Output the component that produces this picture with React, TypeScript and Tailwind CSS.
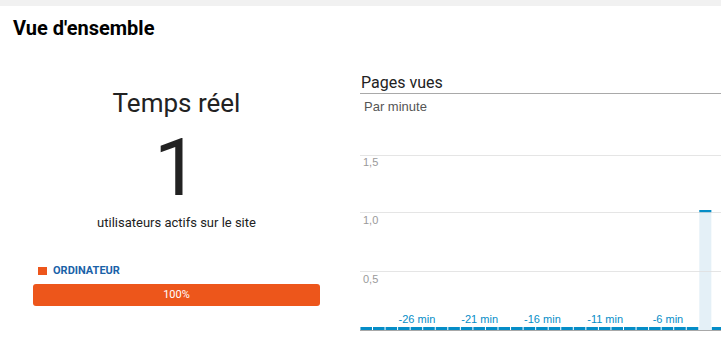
import React from 'react';

const BLUE = '#058dc7';

const xLabels = [
  { bar: 4, text: '-26 min' },
  { bar: 9, text: '-21 min' },
  { bar: 14, text: '-16 min' },
  { bar: 19, text: '-11 min' },
  { bar: 24, text: '-6 min' },
];

function PageViewsChart() {
  const step = 12.55;
  const bars = Array.from({ length: 30 }, (_, i) => i);
  const hot = 27;

  return (
    <svg width="361" height="228" className="block" style={{ fontFamily: "'Liberation Sans', Arial, sans-serif" }}>
      {/* highlighted minute */}
      <rect x={0.45 + step * hot} y={95} width={step - 0.5} height={120} fill="#e4f0f7" />
      <rect x={0.45 + step * hot} y={95} width={step - 0.5} height={3} fill={BLUE} />

      {/* grid */}
      {[40, 97, 156].map((y) => (
        <rect key={y} x={0} y={y} width={361} height={1} fill="#dedede" opacity={0.8} />
      ))}
      <text x={3} y={51} fontSize="11" fill="#9a9a9a">1,5</text>
      <text x={3} y={109} fontSize="11" fill="#9a9a9a">1,0</text>
      <text x={3} y={168} fontSize="11" fill="#9a9a9a">0,5</text>

      {/* zero values */}
      {bars.map((i) =>
        i === hot ? null : (
          <rect key={i} x={0.45 + step * i} y={212} width={step - 1} height={3} fill={BLUE} />
        )
      )}
      <rect x={0} y={215} width={361} height={1} fill="#a8a8a8" />

      {xLabels.map((l) => (
        <text
          key={l.text}
          x={0.45 + step * l.bar + step / 2}
          y={208}
          fontSize="11"
          fill={BLUE}
          textAnchor="middle"
        >
          {l.text}
        </text>
      ))}
    </svg>
  );
}

export default function App() {
  return (
    <div className="w-[721px] h-[343px] overflow-hidden bg-white" style={{ fontFamily: "Roboto, 'Liberation Sans', sans-serif" }}>
      <div className="h-[6px] bg-[#f1f1f1]" />

      <div className="pt-[10px] px-[13px]">
        <h1 className="text-[20px] leading-[24px] font-bold text-black">Vue d'ensemble</h1>
      </div>

      <div className="mt-[20px] flex">
        {/* Real time */}
        <div className="w-[353px] flex flex-col items-center pt-[27px] px-[33px]">
          <div className="text-[26px] leading-[32px] text-[#222]">Temps réel</div>
          <div className="mt-[9px] text-[80px] leading-[80px] text-[#222]">1</div>
          <div className="mt-[7px] text-[13px] leading-[16px] text-[#222]">utilisateurs actifs sur le site</div>

          <div className="self-stretch mt-[34px] flex items-center gap-[6px] pl-[5px]">
            <span className="w-[9px] h-[8px] bg-[#ed561b]" />
            <span className="text-[11px] leading-[12px] font-bold text-[#1a62a8]">ORDINATEUR</span>
          </div>
          <div className="self-stretch mt-[7px] h-[22px] rounded-[3px] bg-[#ed561b] flex items-center justify-center">
            <span className="text-[11px] text-white">100%</span>
          </div>
        </div>

        {/* Page views */}
        <div className="ml-[7px] flex-1 overflow-hidden pt-[11px]">
          <div className="h-[23px] border-b border-[#a9a9a9]">
            <span className="pl-[1px] text-[16px] leading-[20px] text-[#222]">Pages vues</span>
          </div>
          <div
            className="mt-[5px] pl-[4px] text-[13px] leading-[16px] text-[#555]"
            style={{ fontFamily: "'Liberation Sans', Arial, sans-serif" }}
          >
            Par minute
          </div>
          <PageViewsChart />
        </div>
      </div>
    </div>
  );
}
